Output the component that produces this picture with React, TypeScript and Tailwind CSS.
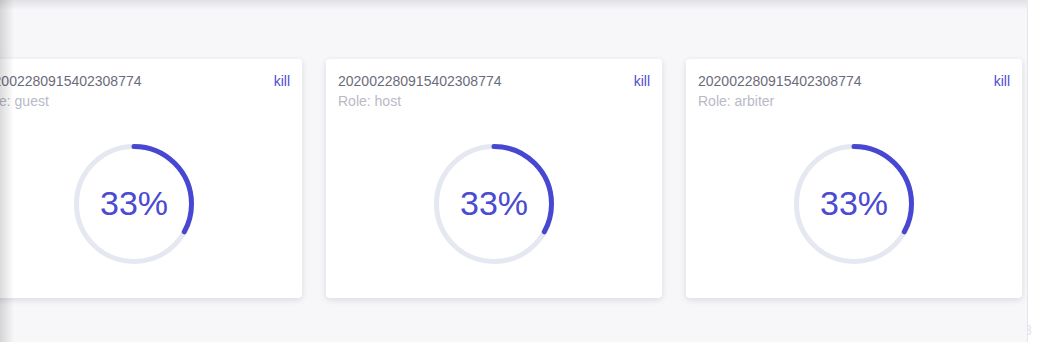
const jobs = [
  { id: "202002280915402308774", role: "guest", progress: 33 },
  { id: "202002280915402308774", role: "host", progress: 33 },
  { id: "202002280915402308774", role: "arbiter", progress: 33 },
];

function Ring({ value }: { value: number }) {
  const r = 57.5;
  const c = 2 * Math.PI * r;
  return (
    <div className="relative size-[120px]">
      <svg width={120} height={120} viewBox="0 0 120 120" className="-rotate-90">
        <circle cx={60} cy={60} r={r} fill="none" stroke="#e5e8f1" strokeWidth={5} />
        <circle
          cx={60}
          cy={60}
          r={r}
          fill="none"
          stroke="#4747d1"
          strokeWidth={5}
          strokeLinecap="round"
          strokeDasharray={`${(c * value) / 100} ${c}`}
        />
      </svg>
      <span className="absolute inset-0 flex items-center justify-center text-[34px] text-[#4a4ad2]">
        {value}%
      </span>
    </div>
  );
}

function JobCard({ id, role, progress }: { id: string; role: string; progress: number }) {
  return (
    <div className="flex h-[239px] w-[336px] shrink-0 flex-col rounded-[4px] bg-white px-3 pt-3 shadow-[0_2px_6px_rgba(40,40,80,0.14)]">
      <div className="flex items-start justify-between text-[14px] leading-5">
        <div>
          <div className="text-[#6b6c7b]">{id}</div>
          <div className="text-[#b9b9c6]">Role: {role}</div>
        </div>
        <button className="text-[#4d4bd1]">kill</button>
      </div>
      <div className="flex flex-1 items-center justify-center pb-[2px]">
        <Ring value={progress} />
      </div>
    </div>
  );
}

export default function App() {
  return (
    <div className="flex h-[348px] w-[1042px] bg-white font-['Liberation_Sans',Arial,sans-serif]">
      <div className="relative h-[342px] w-[1028px] overflow-hidden border-r border-[#e6e6ea] bg-[#f7f7f9]">
        <div className="ml-[-34px] flex gap-6 pt-[59px]">
          {jobs.map((j, i) => (
            <JobCard key={i} {...j} />
          ))}
        </div>
        <div className="pointer-events-none absolute inset-x-0 top-0 h-[10px] bg-gradient-to-b from-[rgba(60,60,90,0.12)] to-transparent" />
        <div className="pointer-events-none absolute inset-y-0 left-0 w-[14px] bg-gradient-to-r from-[rgba(0,0,0,0.14)] to-transparent" />
      </div>
      <div className="relative flex-1 overflow-hidden">
        <span className="absolute left-[-4px] top-[320px] text-[14px] text-[#e4e4e8]">3</span>
      </div>
    </div>
  );
}
